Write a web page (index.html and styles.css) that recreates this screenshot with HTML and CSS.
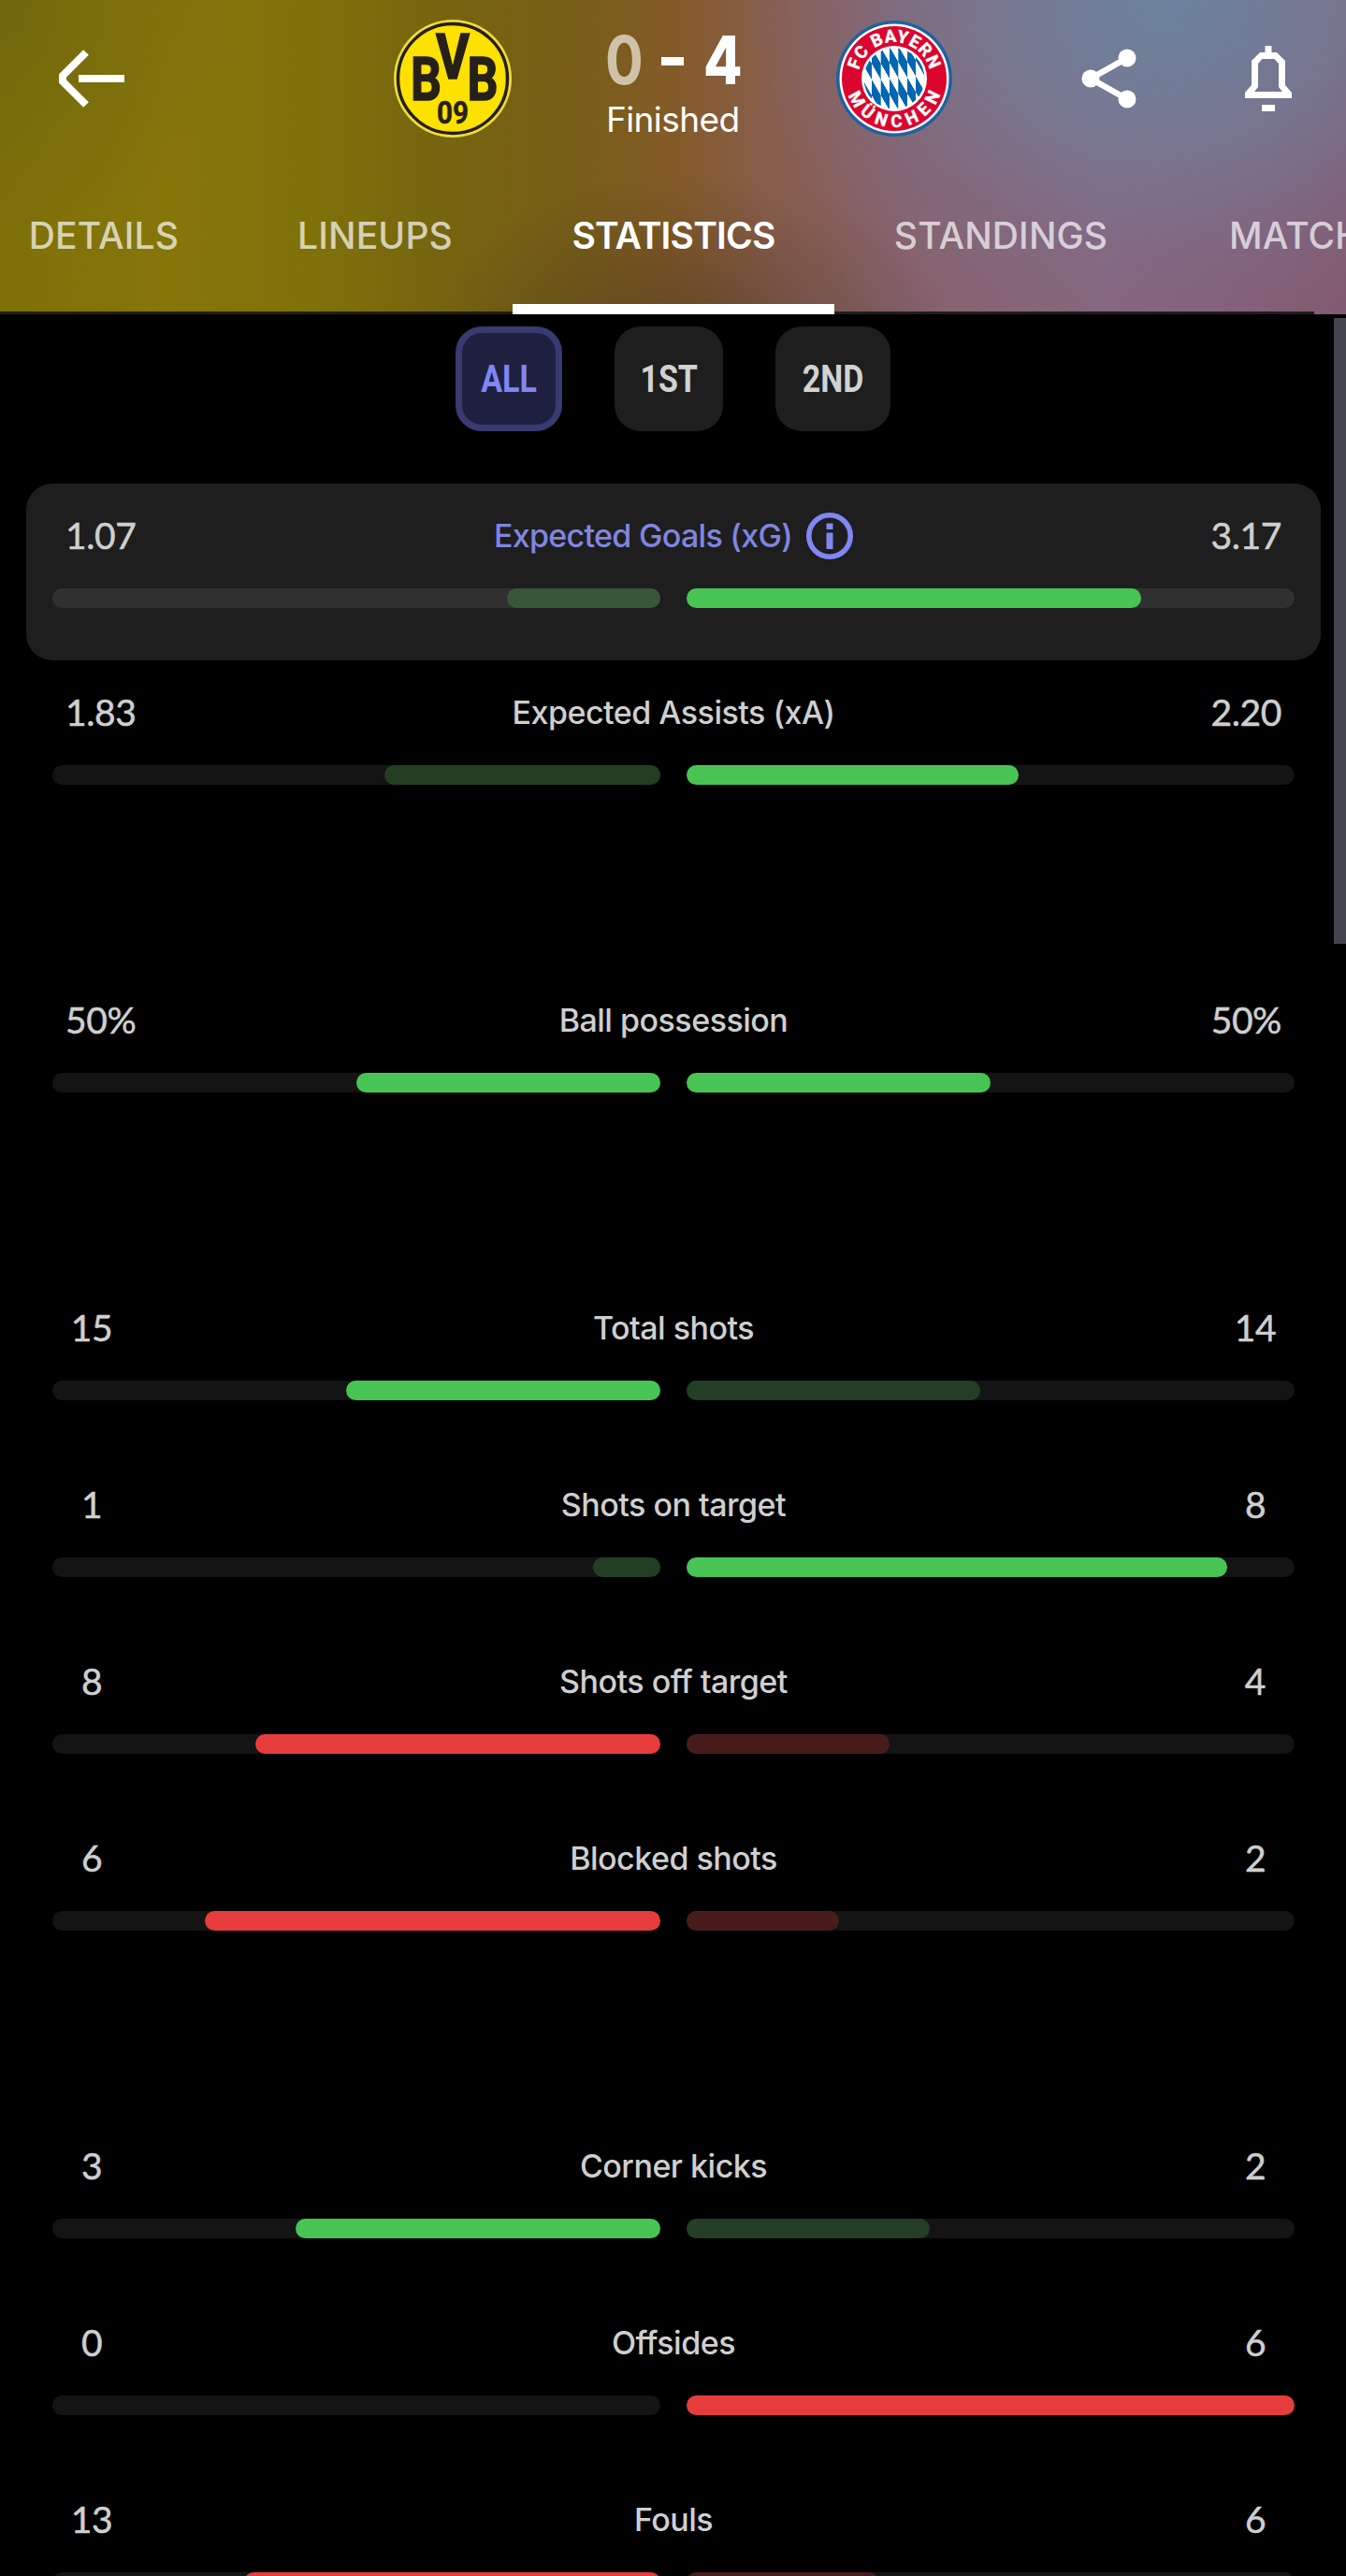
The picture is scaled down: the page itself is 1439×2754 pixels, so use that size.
FILE: index.html
```html
<!DOCTYPE html>
<html lang="en">
<head>
<meta charset="utf-8">
<title>Match statistics</title>
<link rel="stylesheet" href="styles.css">
</head>
<body>
<header class="header">
  <div class="topbar">
    <svg class="back" viewBox="0 0 72 64" width="72" height="64"><path d="M30 4 L5 29 V35 L30 60 M22 32 H71" fill="none" stroke="#fff" stroke-width="8"/></svg>
    <svg class="crest-home" viewBox="-64 -64 128 128" width="128" height="128">
      <circle r="63" fill="#f0dc3c"/><circle r="58.500" fill="#fde100" stroke="#26201a" stroke-width="3.500"/>
      <g fill="#26201a" font-family="Roboto" font-weight="700" stroke="#26201a">
        <text x="-45" y="22.500" font-size="65" stroke-width="1.500" textLength="33" lengthAdjust="spacingAndGlyphs">B</text>
        <text x="-18" y="0" font-size="66" stroke-width="1.500" textLength="36" lengthAdjust="spacingAndGlyphs">V</text>
        <text x="15.500" y="22.500" font-size="65" stroke-width="1.500" textLength="33" lengthAdjust="spacingAndGlyphs">B</text>
        <text x="-17" y="47.500" font-size="33" textLength="34" lengthAdjust="spacingAndGlyphs" stroke-width=".500">09</text>
      </g>
    </svg>
    <div class="result">
      <div class="score"><span class="lost">0</span><i class="dash"></i><span class="won">4</span></div>
      <div class="status">Finished</div>
    </div>
    <svg class="crest-away" viewBox="-63 -63 126 126" width="126" height="126">
      <defs>
        <pattern id="loz" width="18.800" height="34" patternUnits="userSpaceOnUse" patternTransform="translate(-5 0) skewY(60)">
          <rect width="18.800" height="34" fill="#fff"/>
          <path d="M0 0H9.400V17H0Z M9.400 17H18.800V34H9.400Z" fill="#0066b2"/>
        </pattern>
        <path id="arc-top" d="M-39 0 A39 39 0 0 1 39 0"/>
        <path id="arc-bottom" d="M-52 0 A52 52 0 0 0 52 0"/>
      </defs>
      <circle r="62" fill="#1f629f"/><circle r="58.500" fill="#fff"/><circle r="56" fill="#dc052d"/><circle r="35" fill="#fff"/><circle r="32.500" fill="url(#loz)"/>
      <g fill="#fff" stroke="#fff" stroke-width=".500" font-family="Roboto" font-weight="700" font-size="18.500">
        <text><textPath href="#arc-top" startOffset="9" textLength="104">FC BAYERN</textPath></text>
        <text><textPath href="#arc-bottom" startOffset="18" textLength="128">MÜNCHEN</textPath></text>
      </g>
    </svg>
    <svg class="share" viewBox="0 0 60 66" width="60" height="66"><path d="M49 11 L10 33 L49 55" fill="none" stroke="#fff" stroke-width="6.500"/><circle cx="49" cy="11" r="9.500" fill="#fff"/><circle cx="10" cy="33" r="9.500" fill="#fff"/><circle cx="49" cy="55" r="9.500" fill="#fff"/></svg>
    <svg class="bell" viewBox="0 0 50 70" width="50" height="70"><path fill="#fff" fill-rule="evenodd" d="M21.500 0H28.500V7H34L43 16V42L50 50V56H0V50L7 42V16L16 7H21.500Z M18.500 14L14 19V44L10 49H40L36 44V19L31.500 14Z M18 63H32V70H18Z"/></svg>
  </div>
  <nav class="tabs">
    <a class="tab details"><span>DETAILS</span></a>
    <a class="tab lineups"><span>LINEUPS</span></a>
    <a class="tab statistics active"><span>STATISTICS</span></a>
    <a class="tab standings"><span>STANDINGS</span></a>
    <a class="tab matches"><span>MATCHES</span></a>
  </nav>
</header>
<div class="scrollbar"></div>
<main>
  <div class="periods">
    <button class="period all selected"><span>ALL</span></button>
    <button class="period first"><span>1ST</span></button>
    <button class="period second"><span>2ND</span></button>
  </div>
  <section class="stats" id="stats"></section>
</main>
<script src="stats.js"></script>
</body>
</html>
```
FILE: stats.js
```js
const groups = [
  [['1.07', 'Expected Goals (xG)', '3.17', 'home-low'], ['1.83', 'Expected Assists (xA)', '2.20', 'home-low']],
  [['50%', 'Ball possession', '50%', '']],
  [['15', 'Total shots', '14', 'away-low'], ['1', 'Shots on target', '8', 'home-low'], ['8', 'Shots off target', '4', 'away-low negative'], ['6', 'Blocked shots', '2', 'away-low negative']],
  [['3', 'Corner kicks', '2', 'away-low'], ['0', 'Offsides', '6', 'negative'], ['13', 'Fouls', '6', 'away-low negative']]
];
const info = '<svg class="info" viewBox="0 0 50 50" width="50" height="50"><circle cx="25" cy="25" r="22.2" fill="none" stroke="#8086f2" stroke-width="5.6"/><path d="M21.5 11.500h7v6.500h-7zM21.500 21.500h7V39h-7z" fill="#8086f2"/></svg>';
const value = v => `<span class="value">${v}</span>`;
document.getElementById('stats').innerHTML = groups.map((rows, g) =>
  '<div class="group">' + rows.map(([home, label, away, kind], r) => {
    const h = parseFloat(home), a = parseFloat(away), share = h / (h + a) * 100;
    const featured = g === 0 && r === 0;
    return `<div class="stat ${kind}${featured ? ' featured' : ''}">
      <div class="figures">${value(home)}<span class="label">${label}</span>${featured ? info : ''}${value(away)}</div>
      <div class="bars"><div class="track home"><div class="fill" style="width:${share}%"></div></div><div class="track away"><div class="fill" style="width:${100 - share}%"></div></div></div>
    </div>`;
  }).join('') + '</div>').join('');
```
FILE: styles.css
```css
* { box-sizing: border-box; }
html { overflow: hidden; background: #000; }
body { margin: 0; width: 1439px; height: 2754px; overflow: hidden; background: #000; color: #cfcfcf; font-family: Inter, "Liberation Sans", sans-serif; }
.header {
  height: 336px; overflow: hidden;
  background:
    radial-gradient(ellipse 290px 200px at 735px 385px, rgba(62,46,30,.55), rgba(62,46,30,.25) 50%, rgba(62,46,30,0)),
    radial-gradient(ellipse 460px 370px at 1250px 0, rgba(106,132,158,.95), rgba(114,126,154,.75) 40%, rgba(122,116,148,.3) 72%, rgba(125,110,140,0)),
    radial-gradient(circle 260px at 0 0, rgba(95,90,20,.4), rgba(95,90,20,0)),
    linear-gradient(90deg, #7e7009 0, #86760a 180px, #80720a 320px, #75650f 470px, #785e18 620px, #835b27 715px, #895e4e 830px, #86626c 960px, #87657c 1180px, #825a70 1439px);
}
.topbar { height: 168px; display: flex; align-items: center; padding-left: 62px; }
.crest-home { margin-left: 286px; }
.result { width: 144px; margin-left: 100px; padding-top: 18px; }
.score { height: 64px; display: flex; align-items: center; font-size: 72px; font-weight: 800; line-height: 64px; }
.score span { width: 40px; display: block; transform: scaleX(.84); transform-origin: left; margin-left: -1px; }
.score .lost { color: #cfc2a9; font-weight: 700; }
.dash { width: 25px; height: 9px; background: #fff; margin: 2px 22px 0 20px; }
.score .won { color: #fff; }
.status { color: #fff; font-size: 37px; line-height: 52px; margin-top: 6px; margin-left: 0; letter-spacing: -.6px; white-space: nowrap; }
.crest-away { margin-left: 101px; }
.share { margin-left: 137px; }
.bell { margin-left: 115px; }
.tabs { display: flex; height: 168px; margin-left: -32px; width: 1560px; position: relative; }
.tabs::after { content: ""; position: absolute; left: 0; bottom: 0; width: 1437px; height: 3px; background: #20201a; }
.tab { display: flex; justify-content: center; flex: none; padding-top: 60px; line-height: 48px; font-size: 39px; font-weight: 500; letter-spacing: .15px; color: rgba(255,255,255,.7); }
.details { width: 286px; }
.lineups { width: 294px; }
.statistics { width: 344px; letter-spacing: -.8px; }
.standings { width: 356px; }
.matches { padding-left: 66px; }
.active { color: #fff; font-weight: 600; border-bottom: 11px solid #fff; position: relative; z-index: 1; }
.scrollbar { position: absolute; left: 1426px; top: 340px; width: 13px; height: 669px; background: #44454f; }
.periods { display: flex; gap: 56px; padding: 13px 0 0 487px; height: 181px; }
.period { height: 112px; border: 0; padding: 1px 0 0 1px; border-radius: 28px; background: #1e1e1e; color: #d2d2d2; font: 700 40px Roboto, sans-serif; display: flex; align-items: center; justify-content: center; }
.period span { display: block; transform: scaleX(.85); }
.all { width: 114px; }
.first { width: 116px; }
.second { width: 123px; }
.selected { background: #1e2040; border: 7px solid #383b70; color: #8086f2; }
.group { margin-bottom: 140px; }
.group:last-child { margin-bottom: 0; }
.stat { height: 189px; margin: 0 27px 0 28px; padding: 26px 28px 0; border-radius: 28px; }
.featured { background: #1e1e1e; }
.figures { display: flex; height: 60px; align-items: center; justify-content: center; padding: 0 14px; }
.value { min-width: 56px; font: 400 39px/60px Lato, sans-serif; text-align: center; letter-spacing: -.4px; padding-bottom: 2px; -webkit-text-stroke: .5px #cfcfcf; }
.value:first-child { margin: 0 auto 0 0; }
.value:last-child { margin: 0 0 0 auto; }
.label { font-size: 34px; line-height: 60px; font-weight: 500; letter-spacing: -.5px; white-space: nowrap; }
.featured .label { color: #8086e0; letter-spacing: -.7px; }
.info { margin-left: 15px; }
.bars { display: flex; gap: 28px; margin-top: 26px; }
.track { flex: 1; height: 21px; border-radius: 10.5px; background: #141414; display: flex; }
.home { justify-content: flex-end; }
.fill { height: 21px; border-radius: 10.5px; background: #48c454; }
.featured .track { background: #303030; }
.negative .fill { background: #e63c3c; }
.home-low .home .fill, .away-low .away .fill { background: #233e24; }
.featured.home-low .home .fill { background: #385639; }
.negative.away-low .away .fill { background: #491c1c; }
```
